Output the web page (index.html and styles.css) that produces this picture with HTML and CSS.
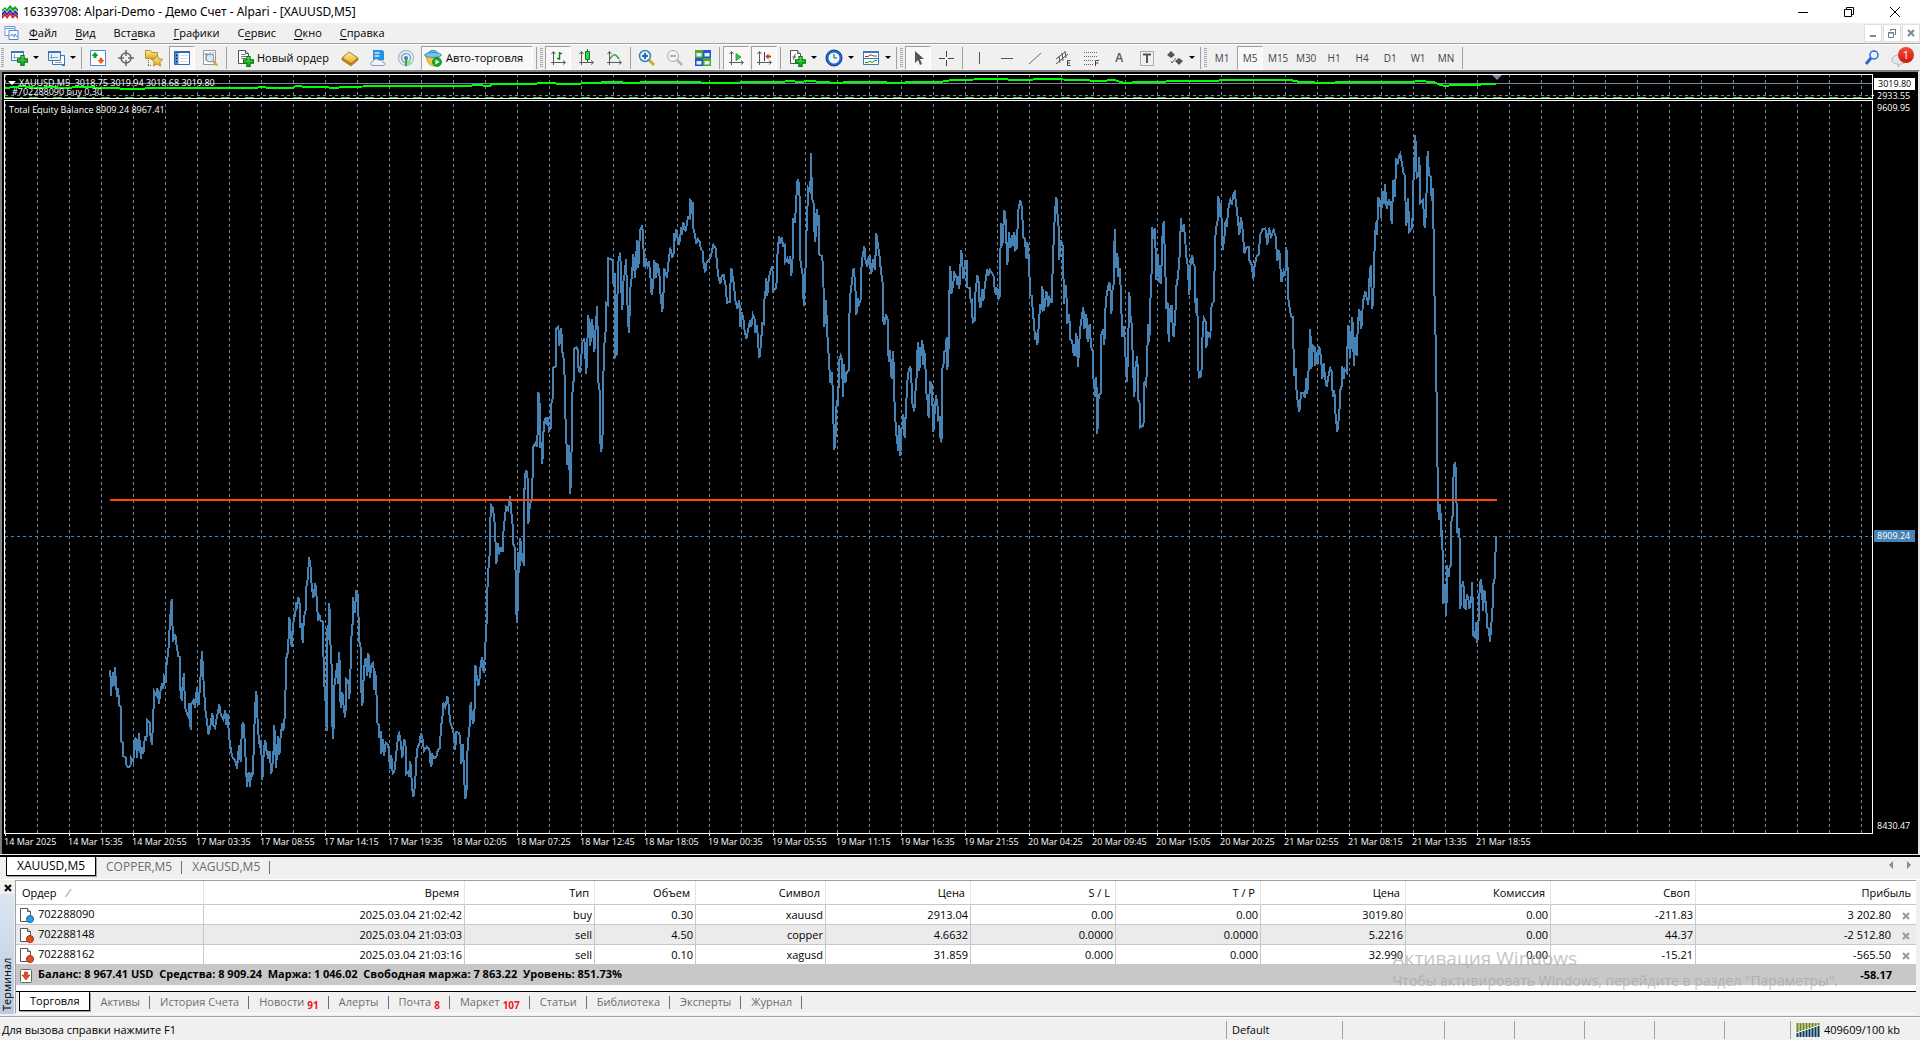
FILE: index.html
```html
<!DOCTYPE html>
<html lang="ru">
<head>
<meta charset="utf-8">
<title>16339708: Alpari-Demo - Демо Счет - Alpari - [XAUUSD,M5]</title>
<link rel="stylesheet" href="styles.css">
</head>
<body>
<svg class="defs" width="0" height="0" aria-hidden="true">
  <defs>
    <linearGradient id="gGreen" x1="0" y1="0" x2="0" y2="1"><stop offset="0" stop-color="#5be45b"/><stop offset="1" stop-color="#08a018"/></linearGradient>
    <linearGradient id="gGold" x1="0" y1="0" x2="0" y2="1"><stop offset="0" stop-color="#fff0a0"/><stop offset="1" stop-color="#e0a820"/></linearGradient>
    <symbol id="plus" viewBox="0 0 10 10"><path d="M3.500.5h3v3h3v3h-3v3h-3v-3h-3v-3h3z" fill="url(#gGreen)" stroke="#087a10"/></symbol>
    <symbol id="axes" viewBox="0 0 18 18"><path d="M4.500 3v13M2 13.500h14M2.500 5l2-2.500 2 2.500M14 11.500l2.500 2-2.500 2" fill="none" stroke="#5a5a5a"/></symbol>
    <symbol id="doc" viewBox="0 0 16 16"><path d="M2.500 1.500h7l3 3v10h-10z" fill="#fff" stroke="#555"/><path d="M9.500 1.500v3h3" fill="#ddd" stroke="#555"/></symbol>
  </defs>
</svg>

<header class="titlebar">
  <svg class="i16" viewBox="0 0 16 16"><path d="M0 6l3-3 2 2 3-4 3 3 2-2 3 3v3l-3-3-2 3-3-4-3 4-2-3-3 3z" fill="#14a51e"/><path d="M0 9l3-3 2 3 3-4 3 4 2-3 3 3v3l-3-3-2 3-3-4-3 4-2-3-3 3z" fill="#2430d0"/><path d="M0 12l3-3 2 3 3-4 3 4 2-3 3 3v3l-3-3-2 3-3-4-3 4-2-3-3 3z" fill="#e02020"/></svg>
  <h1>16339708: Alpari-Demo - Демо Счет - Alpari - [XAUUSD,M5]</h1>
  <div class="winbtns">
    <button type="button" aria-label="Свернуть"><svg viewBox="0 0 12 12"><path d="M1 6.500h10" stroke="#000"/></svg></button>
    <button type="button" aria-label="Развернуть"><svg viewBox="0 0 12 12"><path d="M1.500 3.500h7v7h-7zM3.500 3.500v-2h7v7h-2" fill="none" stroke="#000"/></svg></button>
    <button type="button" aria-label="Закрыть"><svg viewBox="0 0 12 12"><path d="M1 1l10 10M11 1L1 11" stroke="#000"/></svg></button>
  </div>
</header>

<nav class="menubar">
  <svg class="i16" viewBox="0 0 16 16"><path d="M1 1.500h10v9h-10zM1 3.500h10" fill="#fff" stroke="#6f9bdc"/><path d="M5 5.500h9v9h-9z" fill="#fff" stroke="#4f86d8"/><path d="M6.500 11l1.500-2 2 3 1-3 2 3" fill="none" stroke="#4f86d8"/></svg>
  <button type="button"><u>Ф</u>айл</button>
  <button type="button"><u>В</u>ид</button>
  <button type="button">Вст<u>а</u>вка</button>
  <button type="button"><u>Г</u>рафики</button>
  <button type="button">С<u>е</u>рвис</button>
  <button type="button"><u>О</u>кно</button>
  <button type="button"><u>С</u>правка</button>
  <div class="mdibtns">
    <button type="button" aria-label="Свернуть окно"><svg viewBox="0 0 12 12"><path d="M3 9h6" stroke="#778899" stroke-width="2"/></svg></button>
    <button type="button" aria-label="Восстановить окно"><svg viewBox="0 0 12 12"><path d="M2.500 5.500h5v5h-5zM2 6h6M4.500 4V2.500h5v5H8.500M4 2.500h6" fill="none" stroke="#6b7c8d"/></svg></button>
    <button type="button" aria-label="Закрыть окно"><svg viewBox="0 0 12 12"><path d="M3 3l6 6M9 3L3 9" stroke="#778899" stroke-width="2"/></svg></button>
  </div>
</nav>

<div class="toolbar" role="toolbar">
  <i class="grip"></i>
  <button type="button" class="tb drop" aria-label="Новый график"><svg viewBox="0 0 18 18"><path d="M1.500 2.500h12v9h-12z" fill="#fff" stroke="#3a78b8"/><path d="M1 3h13" stroke="#3a78b8" stroke-width="2"/><path d="M4.500 5v5M3 8.500h8" stroke="#7aa4c8"/><use href="#plus" x="7" y="6" width="11" height="11"/></svg></button>
  <button type="button" class="tb drop" aria-label="Профили"><svg viewBox="0 0 18 18"><path d="M5.500 6.500h12v9h-12z" fill="#fff" stroke="#3a78b8"/><path d="M1.500 2.500h12v9h-12z" fill="#e8f2fc" stroke="#3a78b8"/><path d="M1 3h13M15 16h3" stroke="#3a78b8" stroke-width="2"/><path d="M4.500 5v5M3 8.500h8M8 13.500h7" stroke="#7aa4c8"/></svg></button>
  <i class="sep"></i>
  <button type="button" class="tb" aria-label="Обзор рынка"><svg viewBox="0 0 18 18"><path d="M1.500 1.500h15v15h-15z" fill="#fff" stroke="#4c8ac8"/><path d="M6 3l3.500 4H7.500v2h-3V7h-2z" fill="#14a01e"/><path d="M12 15l3.500-4h-2V9h-3v2h-2z" fill="#f05a10"/></svg></button>
  <button type="button" class="tb" aria-label="Окно данных"><svg viewBox="0 0 18 18"><circle cx="9" cy="9" r="5" fill="none" stroke="#666" stroke-width="1.500"/><path d="M9 1v6M9 11v6M1 9h6M11 9h6" stroke="#666" stroke-width="1.500"/></svg></button>
  <button type="button" class="tb" aria-label="Избранное"><svg viewBox="0 0 18 18"><path d="M.5 1.500h5l1 2h6v6h-12z" fill="url(#gGold)" stroke="#b89030"/><path d="M3.500 11v6M3 16.500h4" stroke="#666" stroke-dasharray="1 1"/><path d="M12 6l1.800 3.800 4 .5-3 2.800.8 4L12 15l-3.600 2 .8-4-3-2.800 4-.5z" fill="url(#gGold)" stroke="#c09020"/></svg></button>
  <button type="button" class="tb on" aria-label="Навигатор"><svg viewBox="0 0 18 18"><path d="M1.500 2.500h15v13h-15z" fill="#fff" stroke="#2c6cae"/><path d="M1 3h16" stroke="#2c6cae" stroke-width="2"/><path d="M2 4h3.500v11H2z" fill="#4b8ad0"/><path d="M7 6.500h8M7 9.500h8M7 12.500h8" stroke="#d8dcec"/><path d="M3 6.500h1M3 9.500h1M3 12.500h1" stroke="#003"/></svg></button>
  <button type="button" class="tb" aria-label="Тестер"><svg viewBox="0 0 18 18"><path d="M2.500 1.500h12v14h-12z" fill="#fff" stroke="#999"/><path d="M5 12V4M3.500 5h4M9 8V3M12 7V3" stroke="#888"/><circle cx="9" cy="9" r="4" fill="#cfe4f4" fill-opacity=".8" stroke="#6a94b8"/><path d="M12 12l4 4.500" stroke="#e0a030" stroke-width="2.500"/></svg></button>
  <i class="sep"></i>
  <button type="button" class="tb label"><svg viewBox="0 0 18 18"><use href="#doc" width="16" height="16"/><path d="M5 5.500h4M5 7.500h6M5 9.500h5" stroke="#777"/><use href="#plus" x="7" y="7" width="11" height="11"/></svg><span>Новый ордер</span></button>
  <button type="button" class="tb" aria-label="MetaEditor"><svg viewBox="0 0 18 18"><path d="M1 9l7-6 9 6-7 6z" fill="url(#gGold)" stroke="#a87818"/><path d="M1 9v2l9 6 7-6V9l-7 6z" fill="#c88a18" stroke="#906010" stroke-width=".6"/></svg></button>
  <button type="button" class="tb" aria-label="VPS"><svg viewBox="0 0 18 18"><path d="M4 1h9l2 1.500V11H4z" fill="#1f93e8"/><path d="M5.500 4h5M5.500 7h5" stroke="#cfe8ff" stroke-width="1.500"/><path d="M4 16.500c-3 0-3-4 0-4 .5-3 5-3.500 6-1 3-1 5 1 4 2 3 0 2.500 3 0 3z" fill="#eef4fc" stroke="#8a9cb8"/></svg></button>
  <button type="button" class="tb" aria-label="Сигналы"><svg viewBox="0 0 18 18"><circle cx="9" cy="9" r="7.500" fill="none" stroke="#a9c3dc" stroke-width="1.500"/><circle cx="9" cy="9" r="4.500" fill="none" stroke="#7fa6c8" stroke-width="1.500"/><path d="M9 9l5.500 5A8 8 0 0 1 9 17z" fill="#9adf90"/><path d="M9 9v8" stroke="#2fae3a" stroke-width="2"/><circle cx="9" cy="9" r="2" fill="#3a80b8"/></svg></button>
  <button type="button" class="tb label on"><svg viewBox="0 0 18 18"><path d="M2 7c1 6 3 9 7 10 3-1 5-4 6-9z" fill="#f0c848" stroke="#b08820" stroke-width=".7"/><path d="M4 5c1-5 9-5 10 0z" fill="#64b0dc" stroke="#2c7cac" stroke-width=".7"/><ellipse cx="9" cy="6" rx="8.500" ry="2.500" fill="#78c0e8" stroke="#2c7cac" stroke-width=".7"/><circle cx="13" cy="13" r="4.500" fill="#12b022" stroke="#087818" stroke-width=".7"/><path d="M11.500 10.500l4 2.500-4 2.500z" fill="#fff"/></svg><span>Авто-торговля</span></button>
  <i class="sep"></i><i class="grip"></i>
  <button type="button" class="tb on" aria-label="Бары"><svg viewBox="0 0 18 18"><use href="#axes" width="18" height="18"/><path d="M10.500 3v8M8 9.500h2M11 4.500h2" stroke="#0a8a1a" stroke-width="1.500"/></svg></button>
  <button type="button" class="tb" aria-label="Свечи"><svg viewBox="0 0 18 18"><use href="#axes" width="18" height="18"/><path d="M10.500 0v13" stroke="#0a7a1a"/><path d="M8.500 2.500h4v8h-4z" fill="#2fd84a" stroke="#0a7a1a"/></svg></button>
  <button type="button" class="tb" aria-label="Линия"><svg viewBox="0 0 18 18"><use href="#axes" width="18" height="18"/><path d="M5 10c3-5 5-6 9 0" fill="none" stroke="#3aa048" stroke-width="1.500"/></svg></button>
  <i class="sep"></i>
  <button type="button" class="tb" aria-label="Приблизить"><svg viewBox="0 0 18 18"><path d="M11 11l5 5" stroke="#d8a828" stroke-width="3"/><circle cx="7" cy="7" r="5.500" fill="#e2f2ff" stroke="#3c80c0" stroke-width="1.500"/><path d="M4 7h6M7 4v6" stroke="#2868b0" stroke-width="2"/></svg></button>
  <button type="button" class="tb" aria-label="Отдалить"><svg viewBox="0 0 18 18"><path d="M11 11l5 5" stroke="#b4b4b4" stroke-width="2.500"/><circle cx="7" cy="7" r="5.500" fill="#f4f4f4" stroke="#aaa"/><path d="M4 7h6" stroke="#999" stroke-width="1.500"/></svg></button>
  <button type="button" class="tb" aria-label="Упорядочить окна"><svg viewBox="0 0 18 18"><path d="M1 1h8v8H1zM9 9h8v8H9z" fill="#4ea82c"/><path d="M9 1h8v8H9zM1 9h8v8H1z" fill="#2456d0"/><path d="M2.500 4h5v3.500h-5zM10.500 4h5v3.500h-5zM2.500 12h5v3.500h-5zM10.500 12h5v3.500h-5z" fill="#e4f0fa"/></svg></button>
  <i class="sep"></i>
  <button type="button" class="tb on" aria-label="Автопрокрутка"><svg viewBox="0 0 18 18"><use href="#axes" width="18" height="18"/><path d="M9 4.500l5 3.500-5 3.500z" fill="#2ecc40" stroke="#0a8a1a" stroke-width=".7"/></svg></button>
  <button type="button" class="tb on" aria-label="Сдвиг графика"><svg viewBox="0 0 18 18"><use href="#axes" width="18" height="18"/><path d="M9.500 3v9" stroke="#245" /><path d="M10.500 7.500l3-3v2H16v2h-2.500v2z" fill="#c83a10"/></svg></button>
  <i class="sep"></i>
  <button type="button" class="tb drop" aria-label="Индикаторы"><svg viewBox="0 0 18 18"><use href="#doc" width="16" height="16"/><path d="M5 11c1 0 1-6 3-6M4.500 8H8" stroke="#555" fill="none"/><use href="#plus" x="7" y="7" width="11" height="11"/></svg></button>
  <button type="button" class="tb drop" aria-label="Периоды"><svg viewBox="0 0 18 18"><circle cx="9" cy="9" r="8" fill="#1c6cc8" stroke="#0c3c88"/><circle cx="9" cy="9" r="5.500" fill="#f0f8ff"/><path d="M9 5v4h3" fill="none" stroke="#246"/></svg></button>
  <button type="button" class="tb drop" aria-label="Шаблоны"><svg viewBox="0 0 18 18"><path d="M1.500 2.500h15v13h-15z" fill="#fff" stroke="#3a78b8"/><path d="M1 3.500h16M1 9.500h16" stroke="#3a78b8"/><path d="M1 3h16" stroke="#3a78b8" stroke-width="2"/><path d="M3 7.500h3l2-1.500h2l1 1h4" fill="none" stroke="#a03020"/><path d="M3 13.500h3l2-1.500 2 1.500 3-2h2" fill="none" stroke="#189828"/></svg></button>
  <i class="sep"></i><i class="grip"></i>
  <button type="button" class="tb on" aria-label="Курсор"><svg viewBox="0 0 18 18"><path d="M6 2v12l3-3 2 5 2-1-2-5h4z" fill="#555"/></svg></button>
  <button type="button" class="tb" aria-label="Перекрестие"><svg viewBox="0 0 18 18"><path d="M9.500 2v6M9.500 11v6M2 9.500h6M11 9.500h6" stroke="#444"/></svg></button>
  <i class="sep"></i>
  <button type="button" class="tb" aria-label="Вертикальная линия"><svg viewBox="0 0 18 18"><path d="M9.500 3v12" stroke="#555"/></svg></button>
  <button type="button" class="tb" aria-label="Горизонтальная линия"><svg viewBox="0 0 18 18"><path d="M3 9.500h12" stroke="#555"/></svg></button>
  <button type="button" class="tb" aria-label="Трендовая линия"><svg viewBox="0 0 18 18"><path d="M3 15L15 4" stroke="#666"/></svg></button>
  <button type="button" class="tb" aria-label="Канал"><svg viewBox="0 0 18 18"><path d="M2 10l9-7M2 15L14 5M5 7l1 7M8 4l1 8M11 2l1 7" stroke="#555" fill="none"/><path d="M16.500 11.500h-3v5h3M13.500 14h2.500" stroke="#444" fill="none"/></svg></button>
  <button type="button" class="tb" aria-label="Фибоначчи"><svg viewBox="0 0 18 18"><path d="M2 3.500h14M2 7.500h14M2 11.500h9M2 15.500h9" stroke="#666" stroke-dasharray="1 1"/><path d="M17 11.500h-3.500v5.500M13.500 14h3" stroke="#444" fill="none"/></svg></button>
  <button type="button" class="tb glyph">A</button>
  <button type="button" class="tb" aria-label="Текстовая метка"><svg viewBox="0 0 18 18"><path d="M2.500 2.500h13v14h-13z" fill="none" stroke="#666" stroke-dasharray="1 1"/><path d="M5 5.500h8M9 5v9" stroke="#555" stroke-width="2"/></svg></button>
  <button type="button" class="tb drop" aria-label="Стрелки"><svg viewBox="0 0 18 18"><path d="M5 2l4 4-4 3-4-3zM13 9l4 3-4 4-4-4z" fill="#555"/><path d="M5 12l1 2 4-5" fill="none" stroke="#666"/></svg></button>
  <i class="sep"></i><i class="grip"></i>
  <button type="button" class="tb tf">M1</button>
  <button type="button" class="tb tf on">M5</button>
  <button type="button" class="tb tf">M15</button>
  <button type="button" class="tb tf">M30</button>
  <button type="button" class="tb tf">H1</button>
  <button type="button" class="tb tf">H4</button>
  <button type="button" class="tb tf">D1</button>
  <button type="button" class="tb tf">W1</button>
  <button type="button" class="tb tf">MN</button>
  <i class="sep"></i>
  <div class="tools-right">
    <button type="button" class="tb" aria-label="Поиск"><svg viewBox="0 0 18 18"><circle cx="11" cy="6" r="4" fill="#e8f4ff" stroke="#2c66d8" stroke-width="1.500"/><path d="M8 9l-5 6" stroke="#2c66d8" stroke-width="3"/></svg></button>
    <button type="button" class="tb note" aria-label="Уведомления"><svg viewBox="0 0 18 18"><path d="M8 6c5 0 7 2 7 5s-3 4-6 4l-2 3v-3c-3 0-6-1-6-4s3-5 7-5z" fill="#e6e8ee" stroke="#b0b4bc"/></svg><span class="badge">1</span></button>
  </div>
</div>

<main class="chart">
  <svg class="plot" viewBox="2 72 1872 764" preserveAspectRatio="none" role="img" aria-label="Total Equity Balance">
    <defs><pattern id="grid" x="37" y="2" width="32" height="6" patternUnits="userSpaceOnUse"><rect width="1" height="3" fill="#778899"/></pattern></defs>
    <path d="M5 75h1867v23H5zM5 101h1867v732H5z" fill="url(#grid)"/>
    <g fill="none" shape-rendering="crispEdges">
      <path d="M5 83.500H1872" stroke="#778899"/>
      <path d="M5 95.500H1872" stroke="#778899" stroke-dasharray="3 3"/>
      <path d="M5 97.500H1872" stroke="#32cd32" stroke-dasharray="9 6 3 6"/>
      <polyline points="5,88 15,87 22,86 36,88 52,87 64,88 80,87 110,88 130,89 160,88 256,88 260,87 272,88 292,88 296,86 308,87 326,87 332,88 346,87 380,86 468,86 476,85 490,86 492,84 530,84 545,83 566,84 596,83 606,82 616,82 630,83 650,82 692,82 710,83 770,82 780,82 790,81 800,82 808,81 824,82 836,83 850,82 884,82 890,83 920,82 940,82 946,81 952,80 996,79 1020,80 1046,79 1080,80 1100,81 1114,80 1124,83 1140,82 1156,82 1176,81 1200,81 1216,81 1222,80 1290,80 1300,82 1330,83 1340,82 1412,82 1418,81 1434,82 1440,85 1446,86 1452,85 1466,85 1496,84" stroke="#00ff00" stroke-width="2"/>
      <path d="M5 536.500H1872" stroke="#4682b4" stroke-dasharray="3 3"/>
      <g class="equity">
        <polyline transform="translate(80 480) scale(.33333)" points="86,572 91,572 93,648 96,596 100,577 102,618 105,560 108,615 112,652 114,625 118,675 123,680 124,785 129,788 130,828 137,832 140,858 147,862 153,852 154,835 160,845 163,790 167,773 171,833 177,758 183,838 186,800 190,822 195,768 199,782 202,722 210,730 211,765 216,795 220,700 223,635 229,645 232,623 237,672 241,636 246,610 250,627 252,590 257,600 260,545 265,515 268,460 271,410 275,358 279,485 286,462 290,500 295,528 300,532 301,628 305,662 307,625 312,578 315,683 321,700 325,708 328,670 332,750 334,672 341,660 345,685 351,620 356,676 361,600 366,513 371,610 376,690 381,722 385,763 391,740 397,698 400,735 405,743 411,710 418,674 422,703 430,718 436,690 439,736 443,702 447,770 453,812 457,830 463,838 467,846 471,866 477,795 482,845 486,738 490,726 494,780 497,838 501,922 506,875 510,921 513,878 517,892 520,843 525,690 529,632 534,750 540,805 543,780 547,900 552,802 556,782 560,815 565,835 569,812 574,882 580,830 583,735 588,863 594,768 598,826 602,768 607,728 610,752 614,712 617,615 619,535 624,515 626,465 628,410 632,460 635,500 640,430 646,400 649,366 651,387 655,350 660,375 661,445 665,430 668,488 672,412 677,390 679,320 684,292 687,230 692,265 695,318 700,355 706,308 711,365 714,424 718,402 722,422 729,425 730,510 733,615 736,648 740,752 742,445 744,480 748,368 752,512 756,572 757,732 760,778 763,620 766,598 772,550 774,612 778,515 781,660 784,684 787,636 792,692 796,712 799,597 805,602 808,657 812,555 815,453 818,430 819,350 824,400 829,330 834,348 836,430 838,485 843,508 845,678 849,665 850,610 853,560 857,535 862,588 865,518 870,595 874,556 880,548 883,630 886,573 890,655 892,728 896,735 898,773 902,752 904,822 909,778 912,828 917,788 925,795 930,868 934,825 938,880 943,876 948,828 952,790 957,755 962,785 967,833 973,776 977,800 979,882 985,876 988,892 991,843 995,900 997,930 1000,952 1005,918 1009,838 1013,800 1018,792 1023,760 1028,780 1032,812 1040,800 1048,806 1051,845 1054,860 1057,825 1063,834 1069,832 1073,812 1079,806 1082,762 1085,725 1088,705 1090,668 1096,682 1102,648 1107,682 1110,725 1115,740 1120,755 1126,810 1128,756 1137,758 1141,778 1144,852 1149,792 1152,885 1156,958 1160,925 1162,822 1166,765 1169,738 1172,665 1176,710 1180,732 1184,682 1186,554 1190,590 1195,618 1200,590 1202,555 1206,530 1211,578 1215,520 1217,478 1220,425 1222,332 1225,272 1229,222 1231,118 1234,77 1239,85 1243,120 1246,155 1247,212 1249,252 1254,190 1258,218 1263,205 1268,215 1270,160 1273,128 1278,82 1284,90 1290,47 1294,95 1298,135 1300,192 1305,205 1307,290 1309,400 1312,430 1315,215 1318,278 1321,173 1325,243 1329,218 1331,258 1333,40 1336,-15"/>
        <polyline transform="translate(460 120) scale(.33333)" points="193,1118 195,1065 199,1050 203,1078 205,1213 209,1160 215,1135 217,1108 219,982 226,970 230,980 233,940 235,815 239,855 241,984 245,968 247,1032 250,945 252,908 257,892 260,915 263,892 267,932 272,925 274,852 278,835 279,743 287,740 289,627 295,620 298,678 302,625 305,645 307,695 313,726 315,865 319,950 321,1035 326,975 331,1122 335,978 337,820 341,780 343,686 349,682 354,690 355,740 359,758 363,725 367,668 373,655 379,762 383,640 385,585 391,678 395,596 399,628 403,695 408,605 412,558 414,778 419,812 420,955 424,996 428,938 430,780 432,685 437,630 439,550 444,555 445,415 459,420 460,492 464,460 466,709 470,704 472,545 475,425 481,398 483,488 487,570 490,488 495,455 498,417 501,508 504,598 507,640 511,505 516,465 520,402 525,474 528,430 531,360 535,443 540,332 547,315 550,375 553,440 558,420 563,438 567,424 571,465 575,525 580,490 583,420 588,475 592,430 598,455 600,505 607,577 611,510 613,445 621,473 626,420 631,383 637,413 641,400 643,340 646,362 649,327 653,355 657,375 661,348 664,322 666,345 670,306 677,334 684,292 689,295 690,240 694,245 695,282 698,247 700,325 704,340 709,372 713,357 719,365 723,388 729,395 731,437 736,457 740,425 747,422 753,405 760,375 767,385 771,430 774,465 781,492 785,468 791,465 797,498 801,549 809,546 811,500 814,445 818,470 822,495 826,540 832,565 838,540 841,622 846,577 850,595 853,628 859,657 864,633 870,600 874,620 879,585 884,598 886,638 891,615 894,662 898,715 903,670 907,610 911,612 913,543 917,510 919,473 922,527 927,470 932,452 937,440 940,512 947,505 951,480 952,410 957,347 961,370 965,353 970,378 974,375 976,425 982,415 987,432 991,408 994,468 998,410 1000,293 1004,308 1008,262 1011,190 1015,177 1019,235 1021,418 1026,455 1029,470 1031,558 1036,468 1038,375 1042,268 1045,205 1051,215 1053,100 1056,235 1061,250 1063,330 1066,365 1070,267 1073,318 1076,285 1078,403 1086,408 1089,438 1091,520 1093,620 1098,540 1101,625 1105,690 1108,740 1111,790 1115,755 1118,803 1120,895 1123,991 1127,945 1130,845 1134,850 1136,790 1138,720 1142,708 1146,718 1149,832 1152,732 1156,790 1160,757 1166,752 1168,590 1171,525 1175,492 1181,445 1185,485 1187,522 1189,585 1194,535 1197,552 1203,535 1204,447 1207,415 1213,378 1217,425 1222,440 1226,412 1229,410 1234,462 1239,418 1245,450 1249,340 1254,375 1259,410 1262,445 1268,490 1269,600 1273,615 1278,582 1283,600 1285,705 1288,727 1290,690 1295,778 1300,692 1302,815 1305,875 1308,935 1312,965 1315,994 1318,915 1321,1009"/>
        <polyline transform="translate(900 120) scale(.33333)" points="1,1009 4,925 8,922 10,882 14,955 18,865 22,785 26,752 31,738 34,775 37,850 43,874 47,805 50,770 51,708 55,665 58,752 62,702 67,660 70,735 73,690 77,755 79,820 82,830 86,894 90,783 96,795 97,840 100,937 104,875 108,825 113,862 115,896 119,888 122,967 125,955 127,745 131,730 132,697 137,690 140,650 142,750 146,680 148,527 151,437 154,522 159,498 163,458 169,470 172,495 175,468 178,507 181,440 184,390 190,478 196,422 200,422 202,502 210,505 212,545 216,540 218,607 224,600 226,522 229,495 232,465 236,485 238,540 241,565 247,507 250,542 255,492 262,446 265,468 270,450 276,460 282,470 284,510 288,525 292,503 296,535 299,530 301,400 304,308 307,377 313,270 317,300 319,360 322,436 327,335 331,385 336,345 340,378 343,335 346,390 351,385 354,275 361,240 366,265 370,352 376,358 377,400 380,418 382,366 387,418 389,485 391,525 396,528 399,590 403,604 404,660 408,638 412,676 416,622 418,587 421,558 425,565 427,498 432,574 437,530 439,512 445,560 448,532 455,548 457,480 460,390 462,337 465,275 469,230 473,288 477,335 478,420 482,360 488,378 490,452 492,552 497,495 500,540 502,612 507,582 510,625 511,657 517,665 520,697 524,708 529,638 534,742 540,630 545,595 550,560 553,628 559,582 563,665 569,612 573,680 578,695 580,772 586,832 589,770 592,943 596,825 603,818 604,645 610,628 613,675 616,570 619,530 625,498 628,486 632,518 634,583 638,500 642,492 644,328 648,445 652,400 655,470 660,445 663,540 667,650 672,618 676,700 681,787 684,697 688,515 691,585 695,612 699,735 703,832 706,745 712,708 715,840 719,850 721,922 728,918 732,905 733,785 738,795 740,765 742,690 745,612 748,665 751,548 755,452 757,322 761,357 765,325 769,480 774,402 778,485 783,488 787,355 791,302 795,412 799,568 804,548 806,667 810,570 815,555 818,620 821,652 826,585 829,500 834,470 839,405 843,293 846,337 851,312 855,350 859,410 863,435 868,525 872,425 877,407 881,435 885,440 887,578 892,535 894,740 898,772 904,768 907,665 909,610 912,594 917,605 919,684 924,640 931,650 934,565 937,550 941,545 943,475 946,350 949,320 953,300 955,227 960,290 963,250 968,390 974,345 977,300 981,320 984,270 991,240 996,255 999,225 1004,215 1007,240 1010,265 1014,300 1018,345 1023,290 1028,330 1033,400 1040,380 1046,380 1048,420 1055,435 1060,477 1064,435 1070,410 1077,403 1080,345 1088,328 1096,325 1102,375 1107,323 1113,350 1121,330 1127,350 1132,423 1138,390 1144,487 1151,455 1156,468 1159,380 1163,450 1165,535 1170,570 1174,590 1179,592 1180,670 1183,768 1187,745 1190,820 1194,850 1198,877 1203,820 1210,820 1215,834 1219,773 1222,822 1226,745 1231,628 1234,748 1239,677 1244,683 1246,738 1250,697 1254,733 1257,677 1263,710 1267,777 1271,728 1275,770 1280,800 1286,765 1291,745 1296,757 1298,830 1303,810 1306,875 1312,935 1318,880 1321,810 1325,798 1327,738 1331,777 1334,748 1340,757 1343,665 1345,614 1350,715 1357,590 1362,737 1366,652 1370,708 1374,605 1378,567 1384,627 1389,545 1396,515 1400,532 1405,555 1408,480 1412,435 1417,568 1421,495 1424,375 1428,305 1431,345 1435,232"/>
        <polyline transform="translate(1280 120) scale(.33333 .35714)" points="295,217 301,230 303,275 307,200 311,235 315,180 320,248 327,222 333,245 335,292 340,167 344,215 347,155 349,107 352,125 357,102 361,94 366,122 371,150 375,157 377,248 379,298 384,218 388,312 397,302 399,198 402,142 406,43 410,160 415,155 418,105 421,232 429,224 431,255 434,303 438,258 440,190 443,86 447,155 453,160 455,228 458,190 460,265 463,475 466,575 469,725 472,930 474,1082 478,1120 481,1075 483,1165 487,1148 489,1355 493,1298 499,1390 501,1245 506,1280 509,1250 513,1245 514,1125 518,1108 519,1018 524,957 528,980 531,1157 536,1148 539,1175 541,1370 544,1310 550,1292 553,1365 557,1368 561,1328 566,1345 568,1370 574,1340 577,1293 579,1443 585,1448 589,1405 592,1465 596,1395 598,1330 602,1285 606,1310 609,1375 613,1315 617,1350 620,1385 622,1420 627,1425 630,1462 634,1412 637,1380 640,1300 645,1280 646,1218 649,1165"/>
      </g>
      <path d="M110 500H1497" stroke="#ff4500" stroke-width="2"/>
      <path d="M4.500 74.500H1872.500V98.500H4.500zM4.500 833.500V100.500H1872.500V833.500zM1872 95.500h4" stroke="#fff"/>
      <path d="M5.500 833v4M69.500 833v4M133.500 833v4M197.500 833v4M261.500 833v4M325.500 833v4M389.500 833v4M453.500 833v4M517.500 833v4M581.500 833v4M645.500 833v4M709.500 833v4M773.500 833v4M837.500 833v4M901.500 833v4M965.500 833v4M1029.500 833v4M1093.500 833v4M1157.500 833v4M1221.500 833v4M1285.500 833v4M1349.500 833v4M1413.500 833v4M1477.500 833v4" stroke="#fff"/>
    </g>
    <path d="M1492 75h10l-5 5z" fill="#778899"/>
  </svg>
  <div class="overlay symbol">XAUUSD,M5&nbsp; 3018.75 3019.94 3018.68 3019.80</div>
  <div class="overlay order">#702288090 buy 0.30</div>
  <div class="overlay equity-name">Total Equity Balance 8909.24 8967.41</div>
  <div class="prices">
    <span class="p bid">3019.80</span>
    <span class="p low">2933.55</span>
    <span class="p max">9609.95</span>
    <span class="p now">8909.24</span>
    <span class="p min">8430.47</span>
  </div>
  <div class="dates">
    <span>14 Mar 2025</span><span>14 Mar 15:35</span><span>14 Mar 20:55</span><span>17 Mar 03:35</span><span>17 Mar 08:55</span><span>17 Mar 14:15</span><span>17 Mar 19:35</span><span>18 Mar 02:05</span><span>18 Mar 07:25</span><span>18 Mar 12:45</span><span>18 Mar 18:05</span><span>19 Mar 00:35</span><span>19 Mar 05:55</span><span>19 Mar 11:15</span><span>19 Mar 16:35</span><span>19 Mar 21:55</span><span>20 Mar 04:25</span><span>20 Mar 09:45</span><span>20 Mar 15:05</span><span>20 Mar 20:25</span><span>21 Mar 02:55</span><span>21 Mar 08:15</span><span>21 Mar 13:35</span><span>21 Mar 18:55</span>
  </div>
</main>

<nav class="tabs chart-tabs">
  <button type="button" class="tab active">XAUUSD,M5</button>
  <button type="button" class="tab">COPPER,M5</button>
  <button type="button" class="tab">XAGUSD,M5</button>
  <div class="scrollers">
    <button type="button" aria-label="Назад"><svg viewBox="0 0 6 8"><path d="M5 0v8L1 4z" fill="#8a8a8a"/></svg></button>
    <button type="button" aria-label="Вперед"><svg viewBox="0 0 6 8"><path d="M1 0v8l4-4z" fill="#8a8a8a"/></svg></button>
  </div>
</nav>

<section class="terminal">
  <aside class="side">
    <button type="button" aria-label="Закрыть терминал"><svg viewBox="0 0 8 8"><path d="M1 1l6 6M7 1L1 7" stroke="#000" stroke-width="2"/></svg></button>
    <span>Терминал</span>
  </aside>
  <div class="panel">
    <table>
      <colgroup><col class="c-order"><col class="c-time"><col class="c-type"><col class="c-vol"><col class="c-type"><col class="c-num"><col class="c-num"><col class="c-num"><col class="c-num"><col class="c-num"><col class="c-num"><col></colgroup>
      <thead><tr><th class="first">Ордер <i>⁄</i></th><th>Время</th><th>Тип</th><th>Объем</th><th>Символ</th><th>Цена</th><th>S / L</th><th>T / P</th><th>Цена</th><th>Комиссия</th><th>Своп</th><th>Прибыль</th></tr></thead>
      <tbody>
        <tr><td class="first"><svg viewBox="0 0 16 16"><use href="#doc" width="16" height="16"/><circle cx="12" cy="12" r="3.500" fill="#2c9ce8" stroke="#1468a8"/></svg>702288090</td><td>2025.03.04 21:02:42</td><td>buy</td><td>0.30</td><td>xauusd</td><td>2913.04</td><td>0.00</td><td>0.00</td><td>3019.80</td><td>0.00</td><td>-211.83</td><td>3 202.80<button type="button" aria-label="Закрыть ордер"><svg viewBox="0 0 8 8"><path d="M1 1l6 6M7 1L1 7" stroke="#999" stroke-width="2"/></svg></button></td></tr>
        <tr class="alt"><td class="first"><svg viewBox="0 0 16 16"><use href="#doc" width="16" height="16"/><circle cx="12" cy="12" r="3.500" fill="#e84c1c" stroke="#a82c10"/></svg>702288148</td><td>2025.03.04 21:03:03</td><td>sell</td><td>4.50</td><td>copper</td><td>4.6632</td><td>0.0000</td><td>0.0000</td><td>5.2216</td><td>0.00</td><td>44.37</td><td>-2 512.80<button type="button" aria-label="Закрыть ордер"><svg viewBox="0 0 8 8"><path d="M1 1l6 6M7 1L1 7" stroke="#999" stroke-width="2"/></svg></button></td></tr>
        <tr><td class="first"><svg viewBox="0 0 16 16"><use href="#doc" width="16" height="16"/><circle cx="12" cy="12" r="3.500" fill="#e84c1c" stroke="#a82c10"/></svg>702288162</td><td>2025.03.04 21:03:16</td><td>sell</td><td>0.10</td><td>xagusd</td><td>31.859</td><td>0.000</td><td>0.000</td><td>32.990</td><td>0.00</td><td>-15.21</td><td>-565.50<button type="button" aria-label="Закрыть ордер"><svg viewBox="0 0 8 8"><path d="M1 1l6 6M7 1L1 7" stroke="#999" stroke-width="2"/></svg></button></td></tr>
      </tbody>
      <tfoot><tr><td colspan="11" class="first"><svg viewBox="0 0 16 16"><rect x="2.500" y="1.500" width="11" height="13" rx="1" fill="#fff" stroke="#666"/><path d="M6.500 4h3v3H12l-4 5-4-5h2.500z" fill="#e85018" stroke="#a03010" stroke-width=".6"/></svg>Баланс: 8 967.41 USD&nbsp; Средства: 8 909.24&nbsp; Маржа: 1 046.02&nbsp; Свободная маржа: 7 863.22&nbsp; Уровень: 851.73%</td><td class="total">-58.17</td></tr></tfoot>
    </table>
    <nav class="tabs term-tabs">
      <button type="button" class="tab active">Торговля</button>
      <button type="button" class="tab">Активы</button>
      <button type="button" class="tab">История Счета</button>
      <button type="button" class="tab">Новости<b>91</b></button>
      <button type="button" class="tab">Алерты</button>
      <button type="button" class="tab">Почта<b>8</b></button>
      <button type="button" class="tab">Маркет<b>107</b></button>
      <button type="button" class="tab">Статьи</button>
      <button type="button" class="tab">Библиотека</button>
      <button type="button" class="tab">Эксперты</button>
      <button type="button" class="tab">Журнал</button>
    </nav>
  </div>
</section>

<footer class="status">
  <span class="hint">Для вызова справки нажмите F1</span>
  <span class="cell w116">Default</span>
  <span class="cell w102"></span>
  <span class="cell w70"></span>
  <span class="cell w70"></span>
  <span class="cell w70"></span>
  <span class="cell w70"></span>
  <span class="cell w66"></span>
  <span class="cell net"><svg viewBox="0 0 24 14"><path d="M1.500 0v9M4.500 0v8M7.500 0v7M10.500 0v6M13.500 0v5M16.500 0v4M19.500 0v3M22.500 0v2" stroke="#6b8a14" stroke-width="2"/><path d="M1.500 10v4M4.500 9v5M7.500 8v6M10.500 7v7M13.500 6v8M16.500 5v9M19.500 4v10M22.500 3v11" stroke="#0c3c5c" stroke-width="2"/></svg>409609/100 kb</span>
</footer>

<div class="watermark"><strong>Активация Windows</strong><span>Чтобы активировать Windows, перейдите в раздел "Параметры".</span></div>
</body>
</html>
```
FILE: styles.css
```css
* { box-sizing: border-box; }

body {
  margin: 0;
  height: 100vh;
  display: flex;
  flex-direction: column;
  background: #f0f0f0;
  color: #000;
  font: 11px/16px "Open Sans", "Noto Sans", sans-serif;
  overflow: hidden;
}

button {
  margin: 0;
  padding: 0;
  border: 0;
  background: none;
  color: inherit;
  font: inherit;
}

svg { display: block; flex: none; }
.defs { position: absolute; }
.i16 { width: 16px; height: 16px; }

/* title bar */
.titlebar {
  display: flex;
  flex: none;
  align-items: center;
  height: 23px;
  padding-left: 2px;
  background: #fff;
}
.titlebar h1 { margin: 0 0 0 5px; font-size: 12px; font-weight: 400; font-family: "Noto Sans", sans-serif; }
.winbtns { display: flex; margin-left: auto; margin-right: 2px; }
.winbtns button { width: 46px; height: 20px; display: grid; place-items: center; }
.winbtns svg { width: 12px; height: 12px; }

/* menu */
.menubar {
  display: flex;
  flex: none;
  align-items: center;
  height: 21px;
  padding-left: 4px;
  border-bottom: 1px solid #a0a0a0;
}
.menubar > button { padding: 0 9px; }
.menubar u { text-underline-offset: 2px; }
.mdibtns { display: flex; gap: 1px; margin-left: auto; }
.mdibtns button { width: 18px; height: 18px; background: #fff; border: 1px solid #e0e0e0; display: grid; place-items: center; }
.mdibtns svg { width: 12px; height: 12px; }

/* toolbar */
.toolbar {
  display: flex;
  flex: none;
  align-items: center;
  height: 26px;
  border-top: 1px solid #fff;
}
.grip {
  width: 5px;
  height: 20px;
  background: repeating-linear-gradient(#a8a8a8 0 1px, transparent 1px 2px) 1px 0 / 3px 100% no-repeat;
}
.sep { width: 5px; height: 22px; background: linear-gradient(#a0a0a0, #a0a0a0) 2px 0 / 1px 100% no-repeat; }
.tb { position: relative; width: 28px; height: 24px; display: flex; align-items: center; justify-content: center; }
.tb svg { width: 18px; height: 18px; }
.tb.drop { width: 37px; justify-content: flex-start; padding-left: 5px; }
.tb.drop::after { content: ""; margin-left: 5px; border: 3px solid transparent; border-top: 3px solid #000; border-bottom: 0; }
.tb.on { width: 26px; margin: 0 1px; background: #f8f8f8; border: 1px solid #fff; border-top-color: #a0a0a0; border-left-color: #a0a0a0; }
.tb.label { width: auto; padding: 0 7px; gap: 3px; }
.tb.label.on { padding: 0 9px 0 2px; margin: 0 1px; gap: 4px; }
.tb.glyph { font-size: 12px; color: #555; font-weight: 600; }
.tb.tf { font-size: 10px; color: #444; }
.tools-right { display: flex; margin-left: auto; padding-right: 6px; }
.badge {
  position: absolute;
  top: 1px;
  right: 0;
  width: 16px;
  height: 16px;
  border-radius: 8px;
  background: linear-gradient(#f05038, #d01808);
  color: #fff;
  text-align: center;
}

/* chart */
.chart {
  position: relative;
  flex: 1;
  min-height: 0;
  display: grid;
  grid-template: minmax(0, 1fr) 18px / minmax(0, 1fr) 44px;
  background: #000;
  color: #fff;
  border-top: 2px solid #808080;
  border-left: 2px solid #808080;
  border-right: 2px solid #e3e3e3;
  font-size: 9px;
  line-height: 12px;
}
.plot { width: 100%; height: 100%; min-height: 0; }
.plot path, .plot polyline { vector-effect: non-scaling-stroke; }
.equity { stroke: #4682b4; stroke-width: 2; }
.overlay { position: absolute; white-space: pre; }
.symbol { left: 17px; top: 5px; }
.symbol::before { content: ""; position: absolute; left: -11px; top: 4px; border: 4px solid transparent; border-top-color: #fff; border-bottom: 0; }
.order { left: 10px; top: 14px; }
.equity-name { left: 7px; top: 32px; }
.prices { position: relative; }
.p { position: absolute; left: 3px; }
.bid { top: 6px; left: 0; width: 41px; padding-left: 4px; background: #fff; color: #000; }
.low { top: 18px; }
.max { top: 30px; }
.now { top: 60%; left: 0; width: 41px; padding-left: 3px; background: #4682b4; }
.min { bottom: 4px; }
.dates { grid-column: 1 / -1; display: flex; padding-left: 2px; }
.dates span { width: 64px; white-space: nowrap; }

/* tabs */
.tabs { display: flex; flex: none; align-items: flex-start; color: #6d6d6d; }
.tab { display: flex; align-items: center; height: 18px; padding: 0 10px; position: relative; }
.tab:not(.active)::after { content: ""; position: absolute; right: 0; top: 4px; height: 13px; border-right: 1px solid #6d6d6d; }
.tab.active { background: #fff; color: #000; border: 1px solid #000; border-top: 0; box-shadow: 1px 1px #a0a0a0; }
.tab b { color: #f01818; font-size: 10px; padding: 6px 0 0 3px; }
.chart-tabs { height: 25px; margin-top: 1px; padding-left: 6px; border-top: 2px solid #000; border-bottom: 1px solid #fff; font-size: 12px; }
.chart-tabs .tab { height: 19px; }
.scrollers { display: flex; margin: 4px 8px 0 auto; gap: 12px; }
.scrollers svg { width: 6px; height: 8px; }

/* terminal */
.terminal { display: flex; flex: none; height: 136px; padding: 0 4px 2px 0; }
.side { width: 15px; display: flex; flex-direction: column; align-items: center; }
.side button { height: 14px; padding-top: 2px; }
.side svg { width: 8px; height: 8px; }
.side span {
  flex: 1;
  width: 14px;
  margin-right: 1px;
  writing-mode: vertical-rl;
  transform: rotate(180deg);
  background: linear-gradient(#b9cbdc, #dce6f2);
  line-height: 14px;
  padding-top: 3px;
}
.panel { flex: 1; min-width: 0; border-top: 1px solid #a0a0a0; border-left: 1px solid #a0a0a0; border-bottom: 1px solid #fff; background: #f0f0f0; }
table { width: 100%; table-layout: fixed; border-collapse: separate; border-spacing: 0; background: #fff; border-bottom: 6px solid #fff; }
.c-order { width: 188px; }
.c-time { width: 261px; }
.c-type { width: 130px; }
.c-vol { width: 101px; }
.c-num { width: 145px; }
th, td { padding: 0 2px; text-align: right; white-space: nowrap; font-weight: 400; border-right: 1px solid #c8c8c8; }
th { height: 24px; padding-right: 5px; border-right-color: #e5e5e5; border-bottom: 1px solid #c8c8c8; }
td { height: 20px; border-bottom: 1px solid #c8c8c8; }
th:last-child, td:last-child { border-right: 0; }
th.first, td.first { text-align: left; padding-left: 2px; }
th.first { padding-left: 6px; }
th i { margin-left: 8px; color: #777; }
td svg { display: inline-block; width: 16px; height: 16px; margin-right: 4px; vertical-align: middle; }
td button { margin: 0 4px 0 11px; }
td button svg { width: 8px; height: 8px; margin: 0; }
.alt td { background: #ebebeb; }
tfoot td { background: #c8c8c8; border: 0; font-weight: 700; }
tfoot td.total { padding-right: 24px; }
.term-tabs { border-top: 1px solid #000; padding-left: 3px; }
.term-tabs .tab { height: 19px; }

/* status bar */
.status { display: flex; flex: none; align-items: center; height: 24px; border-top: 1px solid #a0a0a0; box-shadow: inset 0 1px #fff; padding-top: 2px; }
.hint { flex: 1; padding-left: 2px; }
.cell { display: flex; align-items: center; gap: 4px; height: 18px; padding-left: 5px; border-left: 1px solid #a0a0a0; }
.w116 { width: 116px; }
.w102 { width: 102px; }
.w70 { width: 70px; }
.w66 { width: 66px; }
.net { width: 130px; }
.net svg { width: 24px; height: 14px; }

/* activation notice drawn over the desktop */
.watermark {
  position: absolute;
  right: 82px;
  bottom: 49px;
  display: flex;
  flex-direction: column;
  color: #a0a0a0;
  opacity: .6;
  font-size: 14px;
  line-height: 20px;
  pointer-events: none;
}
.watermark strong { font-size: 19px; line-height: 26px; font-weight: 400; }
```
